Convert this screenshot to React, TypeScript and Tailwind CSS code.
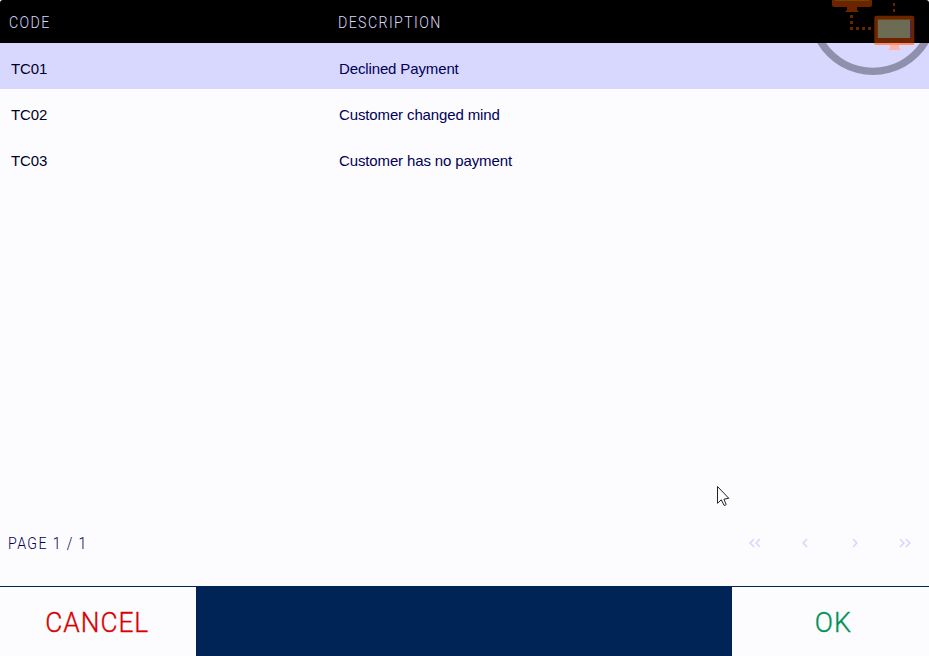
import React from "react";

const reasons = [
  { code: "TC01", description: "Declined Payment" },
  { code: "TC02", description: "Customer changed mind" },
  { code: "TC03", description: "Customer has no payment" },
];

function NetworkLogo() {
  return (
    <svg className="absolute right-0 top-0" width="129" height="90" viewBox="800 0 129 90">
      <path d="M817.2 43A64.7 64.7 0 0 0 928.8 43L920 43A57 57 0 0 1 826 43Z" fill="#9090ad" />
      <path d="M832 0H872V4.5Q872 7 869.5 7H834.5Q832 7 832 4.5Z" fill="#6c2400" />
      <path d="M835.5 0H868.5V1H835.5Z" fill="#6c4900" />
      <path d="M847 7H857V10L859 12H845L847 10Z" fill="#6c2400" />
      <g fill="#6c2400" shapeRendering="crispEdges">
        <path d="M850 15h3v3h-3zM850 21h3v3h-3zM850 27h3v3h-3zM856 27h3v3h-3zM862 27h3v3h-3zM868 27h3v3h-3z" />
        <path d="M893 3h2v3h-2zM893 9h2v3h-2z" />
      </g>
      <rect x="874.3" y="15.7" width="40" height="28.5" rx="2" fill="#6c2400" />
      <path d="M874 43H914.5Q914.5 45 912.5 45H876Q874 45 874 43Z" fill="#ff9062" />
      <path d="M877.5 19H911V38H877.5Z" fill="#6c4900" />
      <path d="M910 20H911V38H910Z" fill="#48246c" />
      <path d="M878 20H910V38H878Z" fill="#6c6c55" />
      <path d="M890 45H899V48L901 50H888L890 48Z" fill="#ffb1ad" />
    </svg>
  );
}

function Chevrons({ double = false, right = false }: { double?: boolean; right?: boolean }) {
  return (
    <svg className={right ? "-scale-x-100" : ""} width="12" height="10" viewBox="0 0 12 10" fill="none" stroke="#d8d8ff" strokeWidth="1.7">
      {double ? <path d="M5 1 1.2 5 5 9M11 1 7.2 5 11 9" /> : <path d="M8 1 4.2 5 8 9" />}
    </svg>
  );
}

export default function App() {
  return (
    <main className="relative flex h-[656px] w-[929px] flex-col overflow-hidden bg-[#fcfcff] font-['Liberation_Sans',sans-serif] text-[15px] text-[#000055]">
      <header className="flex h-[43px] items-center rounded-t-[3px] bg-black pt-[3px] font-['Roboto',sans-serif] text-[16.5px] font-light text-[#d8d8ff]">
        <div className="w-[338px] pl-[9px]"><span className="inline-block origin-left scale-x-[0.86] tracking-[1.6px]">CODE</span></div>
        <span className="inline-block origin-left scale-x-[0.86] tracking-[1.6px]">DESCRIPTION</span>
      </header>
      <section className="flex-1 tracking-[-0.13px]">
        {reasons.map((reason, index) => (
          <div key={reason.code} className={`flex h-[46px] items-center pt-[7px] ${index === 0 ? "bg-[#d8d8ff]" : ""}`}>
            <span className="w-[339px] pl-[11px] text-[#000024]">{reason.code}</span>
            <span>{reason.description}</span>
          </div>
        ))}
      </section>
      <div className="flex h-[86px] items-center justify-between pl-2 pr-[18px]">
        <span className="mt-[2px] inline-block origin-left scale-x-[0.86] font-['Roboto',sans-serif] text-[16.5px] font-light tracking-[1.6px]">PAGE 1 / 1</span>
        <nav className="flex w-[162px] justify-between">
          <Chevrons double /><Chevrons /><Chevrons right /><Chevrons double right />
        </nav>
      </div>
      <footer className="flex h-[70px] border-t border-[#002455] font-['Roboto',sans-serif] text-[28px] font-light">
        <button className="w-[196px] pr-[2px] pt-[3px] text-[#d80000] [-webkit-text-stroke:0.35px_#d80000]"><span className="inline-block scale-x-[0.94] tracking-[1px]">CANCEL</span></button>
        <div className="flex-1 bg-[#002455]" />
        <button className="w-[197px] pl-[6px] pt-[3px] text-[#009055] [-webkit-text-stroke:0.35px_#009055]"><span className="inline-block scale-x-[0.96] tracking-[1px]">OK</span></button>
      </footer>
      <NetworkLogo />
      <svg className="absolute left-[716px] top-[485px]" width="16" height="22" viewBox="0 0 16 22">
        <path d="M1.5 1.5V18.3L5.3 14.8L8 20.3Q9 20.8 10.2 19.5L7.9 14.2L12.8 13.3Z" fill="#fcfcff" stroke="#242424" strokeWidth="1" />
      </svg>
    </main>
  );
}
